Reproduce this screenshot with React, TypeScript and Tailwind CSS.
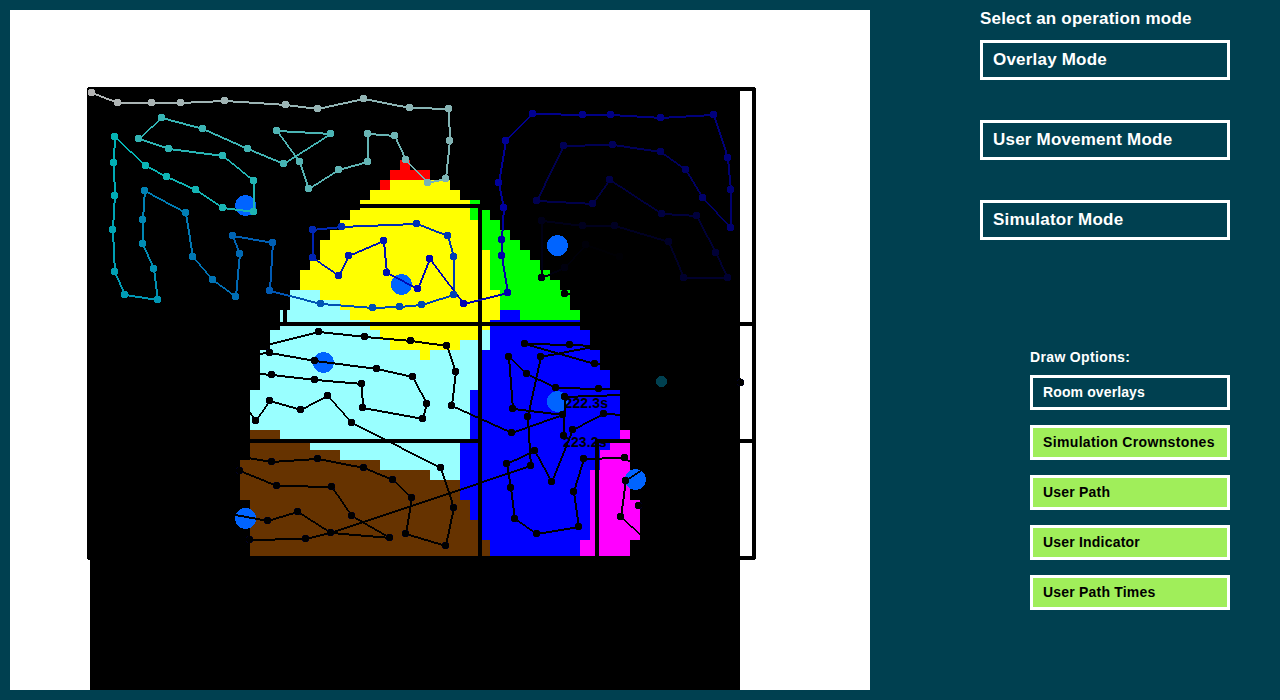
import React from 'react';

type Point = [number, number];
type Rect = [number, number, number, number];

const ROOMS: { color: string; rects: Rect[] }[] = [
  {
    color: '#ff0000',
    rects: [[400, 160, 410, 170], [390, 170, 430, 180], [380, 180, 390, 190]],
  },
  {
    color: '#ffff00',
    rects: [
      [390, 180, 450, 190], [370, 190, 460, 200], [360, 200, 470, 210], [350, 210, 470, 220],
      [340, 220, 480, 230], [330, 230, 480, 240], [320, 240, 480, 250], [320, 250, 490, 260],
      [310, 260, 490, 270], [300, 270, 490, 290], [320, 290, 500, 300], [340, 300, 500, 310],
      [350, 310, 500, 320], [370, 320, 490, 330], [380, 330, 480, 340], [390, 340, 460, 350],
      [420, 350, 430, 360],
    ],
  },
  {
    color: '#00ff00',
    rects: [
      [470, 200, 480, 220], [480, 210, 490, 220], [480, 220, 500, 230], [480, 230, 510, 240],
      [480, 240, 520, 250], [490, 250, 530, 260], [490, 260, 540, 270], [490, 270, 550, 280],
      [490, 280, 560, 290], [500, 290, 570, 310], [520, 310, 580, 320],
    ],
  },
  {
    color: '#99ffff',
    rects: [
      [290, 290, 320, 300], [290, 300, 340, 310], [280, 310, 350, 320], [280, 320, 370, 330],
      [270, 330, 380, 340], [480, 330, 490, 350], [270, 340, 390, 350], [460, 340, 480, 350],
      [260, 350, 420, 360], [430, 350, 480, 360], [260, 360, 480, 390], [250, 390, 470, 430],
      [280, 430, 470, 440], [310, 440, 460, 450], [340, 450, 460, 460], [380, 460, 460, 470],
      [430, 470, 460, 480],
    ],
  },
  {
    color: '#0000ff',
    rects: [
      [500, 310, 520, 320], [490, 320, 580, 330], [490, 330, 590, 350], [480, 350, 600, 370],
      [480, 370, 610, 390], [470, 390, 620, 440], [460, 440, 610, 450], [460, 450, 600, 470],
      [460, 470, 590, 500], [470, 500, 590, 520], [480, 520, 590, 540], [490, 540, 580, 556],
    ],
  },
  {
    color: '#663300',
    rects: [
      [250, 430, 280, 440], [250, 440, 310, 450], [250, 450, 340, 460], [240, 460, 380, 470],
      [240, 470, 430, 480], [240, 480, 460, 500], [250, 500, 470, 520], [250, 520, 480, 556],
      [480, 540, 490, 556],
    ],
  },
  {
    color: '#ff00ff',
    rects: [
      [620, 430, 630, 440], [610, 440, 630, 450], [600, 450, 630, 470], [590, 470, 630, 500],
      [590, 500, 640, 540], [580, 540, 630, 556],
    ],
  },
];

const WALLS: Rect[] = [
  [87, 88, 91, 559], [88, 87, 755, 91], [752, 88, 756, 559], [88, 556, 755, 560],
  [358, 204, 480, 208], [478, 208, 482, 558], [283, 308, 287, 324], [280, 322, 755, 326],
  [248, 439, 480, 443], [595, 439, 755, 443], [595, 441, 599, 558],
];

const USER_PATH: Point[] = [
  [91, 92], [117, 102], [151, 102], [180, 102], [224, 100], [285, 104], [317, 108], [363, 98],
  [409, 107], [448, 108], [449, 140], [445, 178], [427, 182], [405, 159], [394, 135], [367, 133],
  [367, 161], [338, 169], [308, 188], [299, 161], [276, 130], [330, 133], [283, 163], [247, 148],
  [202, 128], [161, 117], [138, 138], [168, 148], [222, 155], [253, 180], [253, 211], [222, 207],
  [195, 189], [166, 176], [145, 165], [114, 136], [113, 162], [114, 195], [112, 229], [114, 271],
  [124, 294], [157, 299], [153, 268], [142, 243], [142, 219], [144, 190], [185, 212], [192, 256],
  [212, 279], [235, 296], [239, 253], [232, 235], [272, 242], [269, 290], [320, 303], [372, 307],
  [399, 306], [421, 304], [453, 294], [453, 256], [447, 235], [416, 223], [341, 226], [312, 229],
  [312, 257], [338, 275], [348, 255], [383, 240], [386, 272], [417, 288], [429, 258], [463, 303],
  [507, 292], [501, 255], [501, 239], [503, 207], [498, 182], [505, 140], [532, 113], [582, 114],
  [610, 114], [660, 117], [713, 114], [727, 157], [730, 189], [730, 227], [702, 197], [685, 169],
  [660, 151], [612, 144], [563, 145], [536, 200], [592, 203], [609, 179], [661, 213], [696, 215],
  [715, 252], [727, 277], [683, 277], [668, 241], [614, 225], [582, 225], [541, 220], [541, 277],
  [564, 267], [585, 244], [619, 256], [607, 281],
];

const DARK_PATHS: Point[][] = [
  [[564, 293], [575, 293]],
  [[266, 344], [318, 331], [364, 336], [410, 340], [446, 345], [455, 371], [451, 405], [511, 432], [562, 414], [512, 408], [508, 356], [526, 373], [555, 387], [598, 388], [625, 388]],
  [[257, 353], [269, 352], [314, 360], [376, 368], [412, 376], [426, 403], [422, 418], [362, 407], [361, 383], [314, 379], [271, 374], [257, 373]],
  [[247, 409], [255, 420], [269, 400], [300, 409], [327, 395], [351, 422], [440, 467], [453, 507], [445, 545], [405, 533], [411, 497], [392, 479], [363, 467], [317, 458], [271, 461], [247, 457]],
  [[239, 470], [276, 485], [331, 486], [351, 515], [389, 537], [330, 532], [297, 511], [267, 520], [234, 514]],
  [[249, 539], [305, 538], [330, 532], [530, 465], [527, 416], [540, 356], [592, 346]],
  [[592, 345], [569, 344], [524, 343], [594, 363], [605, 364]],
  [[622, 394], [564, 396], [563, 435]],
  [[622, 414], [603, 413], [572, 429], [551, 481], [534, 450], [506, 463], [510, 487], [514, 518], [536, 533], [578, 526], [573, 491], [583, 458], [624, 457], [632, 463]],
  [[641, 469], [625, 480], [620, 516], [642, 536]],
  [[638, 505], [645, 508]],
  [[738, 375], [740, 382]],
];

// Points where a trail leaves its room: the line continues, but no marker is drawn.
const UNMARKED = new Set([
  '575,293', '266,344', '625,388', '257,353', '257,373', '247,409', '247,457', '234,514',
  '592,346', '592,345', '605,364', '622,394', '622,414', '632,463', '641,469', '642,536',
  '645,508', '738,375',
]);

const CROWNSTONES: Point[] = [
  [245, 205], [557, 245], [401, 284], [323, 362], [557, 401], [635, 479], [245, 518],
];

function pathColor(index: number): string {
  const step = 180 / 36;
  const level = (start: number) =>
    Math.round(Math.max(0, Math.min(180, 180 - (index - start) * step)));
  return `rgb(${level(0)},${level(35)},${level(71)})`;
}

function Segment({ a, b, color }: { a: Point; b: Point; color: string }) {
  const flat = Math.abs(b[0] - a[0]) > Math.abs(b[1] - a[1]);
  const ox = flat ? 0 : 1;
  const oy = flat ? 1 : 0;
  const shift = 0.95;
  const [ax, ay, bx, by] = [a[0] + shift, a[1] + shift, b[0] + shift, b[1] + shift];
  return (
    <polygon
      fill={color}
      points={`${ax - ox},${ay - oy} ${bx - ox},${by - oy} ${bx + ox},${by + oy} ${ax + ox},${ay + oy}`}
    />
  );
}

function Dot({ at, color, edge }: { at: Point; color: string; edge: string }) {
  return (
    <g>
      <path fill={edge} d={`M${at[0] - 2} ${at[1] - 3}h5v1h1v5h-1v1h-5v-1h-1v-5h1z`} />
      <path
        fill={color}
        d={`M${at[0] - 1} ${at[1] - 3}h3v1h1v1h1v3h-1v1h-1v1h-3v-1h-1v-1h-1v-3h1v-1h1z`}
      />
    </g>
  );
}

function Trail({
  points,
  colorAt,
  edge,
}: {
  points: Point[];
  colorAt: (i: number) => string;
  edge?: string;
}) {
  return (
    <g>
      {points.slice(1).map((p, i) => (
        <Segment key={i} a={points[i]} b={p} color={colorAt(i + 1)} />
      ))}
      {points.map((p, i) =>
        UNMARKED.has(p.join(',')) ? null : (
          <Dot key={i} at={p} color={colorAt(i)} edge={edge ?? colorAt(i)} />
        ),
      )}
    </g>
  );
}

function Block({ rect, fill }: { rect: Rect; fill: string }) {
  const [x1, y1, x2, y2] = rect;
  return <rect x={x1} y={y1} width={x2 - x1} height={y2 - y1} fill={fill} />;
}

function FloorMap() {
  return (
    <svg viewBox="10 10 860 680" width="860" height="680" className="block" shapeRendering="crispEdges">
      <Block rect={[90, 90, 740, 690]} fill="#000000" />
      {ROOMS.map((room) =>
        room.rects.map((r, i) => <Block key={room.color + i} rect={r} fill={room.color} />),
      )}
      {WALLS.map((r, i) => (
        <Block key={i} rect={r} fill="#000000" />
      ))}
      {CROWNSTONES.map(([x, y]) => (
        <circle key={`${x}-${y}`} cx={x + 0.5} cy={y + 0.5} r={10.5} fill="#0064ff" />
      ))}
      {DARK_PATHS.map((points, i) => (
        <Trail key={i} points={points} colorAt={() => '#000000'} edge="#000028" />
      ))}
      <Trail points={USER_PATH} colorAt={pathColor} />
      <circle cx={661.5} cy={381.5} r={5.5} fill="#004050" />
      <g
        fontFamily="'Liberation Sans', Arial, sans-serif"
        fontWeight="700"
        fontSize="14"
        letterSpacing="0.15"
        fill="#000000"
      >
        <text x="564.5" y="408">222.3s</text>
        <text x="563" y="447">223.2s</text>
      </g>
    </svg>
  );
}

function ModeButton({ label }: { label: string }) {
  return (
    <button className="flex h-10 w-[250px] items-center border-3 border-white px-2.5 text-left leading-6 whitespace-nowrap text-white">
      {label}
    </button>
  );
}

function OptionButton({ label, active, tracking }: { label: string; active: boolean; tracking: string }) {
  const state = active ? 'bg-[#a0ee5a] text-black' : 'text-white';
  return (
    <button
      className={`flex h-[35px] w-[200px] items-center border-3 border-white px-2.5 pb-0.5 text-left leading-5 whitespace-nowrap ${state} ${tracking}`}
    >
      {label}
    </button>
  );
}

const MODES = ['Overlay Mode', 'User Movement Mode', 'Simulator Mode'];

const OPTIONS = [
  { label: 'Room overlays', active: false, tracking: 'tracking-[0.12px]' },
  { label: 'Simulation Crownstones', active: true, tracking: 'tracking-[0.35px]' },
  { label: 'User Path', active: true, tracking: 'tracking-[0.2px]' },
  { label: 'User Indicator', active: true, tracking: 'tracking-[0.2px]' },
  { label: 'User Path Times', active: true, tracking: 'tracking-[0.2px]' },
];

export default function App() {
  return (
    <div className="flex h-[700px] w-[1280px] justify-between overflow-hidden bg-[#004050] py-2.5 pr-[50px] pl-2.5 font-['Liberation_Sans',Arial,sans-serif] font-bold">
      <main className="h-[680px] w-[860px] bg-white">
        <FloorMap />
      </main>
      <aside className="flex w-[250px] flex-col">
        <section className="text-[17px] tracking-[0.2px]">
          <h1 className="h-[30px] leading-[17px] whitespace-nowrap text-white">Select an operation mode</h1>
          <div className="flex flex-col gap-10">
            {MODES.map((label) => (
              <ModeButton key={label} label={label} />
            ))}
          </div>
        </section>
        <section className="mt-[109px] self-end text-[14px] tracking-[0.35px]">
          <h2 className="h-[26px] w-[200px] leading-4 text-white">Draw Options:</h2>
          <div className="flex flex-col gap-[15px]">
            {OPTIONS.map((option) => (
              <OptionButton key={option.label} {...option} />
            ))}
          </div>
        </section>
      </aside>
    </div>
  );
}
